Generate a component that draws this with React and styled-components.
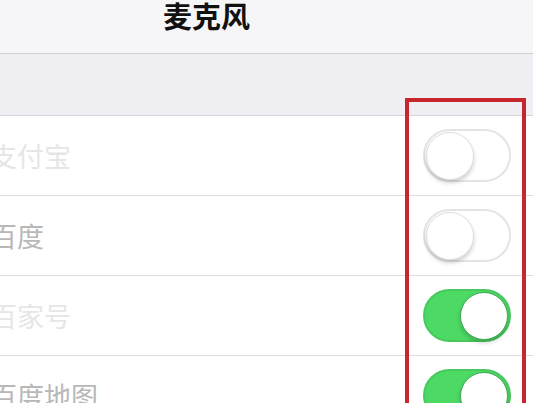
import React from "react";
import styled, { createGlobalStyle } from "styled-components";

// Apps that asked for the microphone
const apps = [
  { nome: "支付宝", ligado: false, desbotado: true },
  { nome: "百度", ligado: false, desbotado: false },
  { nome: "百家号", ligado: true, desbotado: true },
  { nome: "百度地图", ligado: true, desbotado: false },
];

const Global = createGlobalStyle`
  html, body {
    margin: 0;
    padding: 0;
    background: #ffffff;
  }
  body {
    font-family: "Noto Sans CJK SC", "Noto Sans", sans-serif;
  }
`;

const Screen = styled.div`
  position: relative;
  width: 533px;
  height: 403px;
  overflow: hidden;
  background: #ffffff;
`;

const NavBar = styled.div`
  height: 53px;
  background: #f6f6f8;
  border-bottom: 1px solid #cfcfd3;
  display: flex;
  justify-content: center;
  align-items: flex-start;
  padding-right: 120px;
`;

const Title = styled.h1`
  margin: 0;
  padding-top: 1px;
  font-size: 29px;
  line-height: 29px;
  font-weight: 700;
  color: #111111;
`;

const GroupGap = styled.div`
  height: 61px;
  background: #efeff4;
  border-bottom: 1px solid #d6d6da;
`;

const List = styled.div`
  display: flex;
  flex-direction: column;
  background: #ffffff;
`;

const Row = styled.div`
  height: 79px;
  border-bottom: 1px solid #dedede;
  display: flex;
  align-items: center;
  justify-content: space-between;
  padding-right: 22px;
`;

const Label = styled.span`
  margin-left: -10px;
  font-size: 27px;
  line-height: 1;
  color: ${(p) => (p.$faded ? "#e6e6e6" : "#b8b8b8")};
`;

const Switch = styled.div`
  box-sizing: border-box;
  width: 88px;
  height: 53px;
  border-radius: 27px;
  padding: 1px;
  display: flex;
  justify-content: ${(p) => (p.$on ? "flex-end" : "flex-start")};
  background: ${(p) => (p.$on ? "#4cd964" : "#ffffff")};
  border: 2px solid ${(p) => (p.$on ? "#47c95d" : "#e4e4e4")};
`;

const Knob = styled.div`
  box-sizing: border-box;
  width: 48px;
  height: 48px;
  border-radius: 50%;
  background: #ffffff;
  border: 1px solid ${(p) => (p.$on ? "#3fa953" : "#e0e0e0")};
  box-shadow: 0 3px 4px rgba(0, 0, 0, 0.18);
`;

const Highlight = styled.div`
  position: absolute;
  left: 405px;
  top: 98px;
  width: 121px;
  height: 330px;
  box-sizing: border-box;
  border: 4px solid #c9252d;
  pointer-events: none;
`;

const App = () => (
  <Screen>
    <Global />
    <NavBar>
      <Title>麦克风</Title>
    </NavBar>
    <GroupGap />
    <List>
      {apps.map((app, index) => (
        <Row key={index}>
          <Label $faded={app.desbotado}>{app.nome}</Label>
          <Switch $on={app.ligado}>
            <Knob $on={app.ligado} />
          </Switch>
        </Row>
      ))}
    </List>
    <Highlight />
  </Screen>
);

export default App;
